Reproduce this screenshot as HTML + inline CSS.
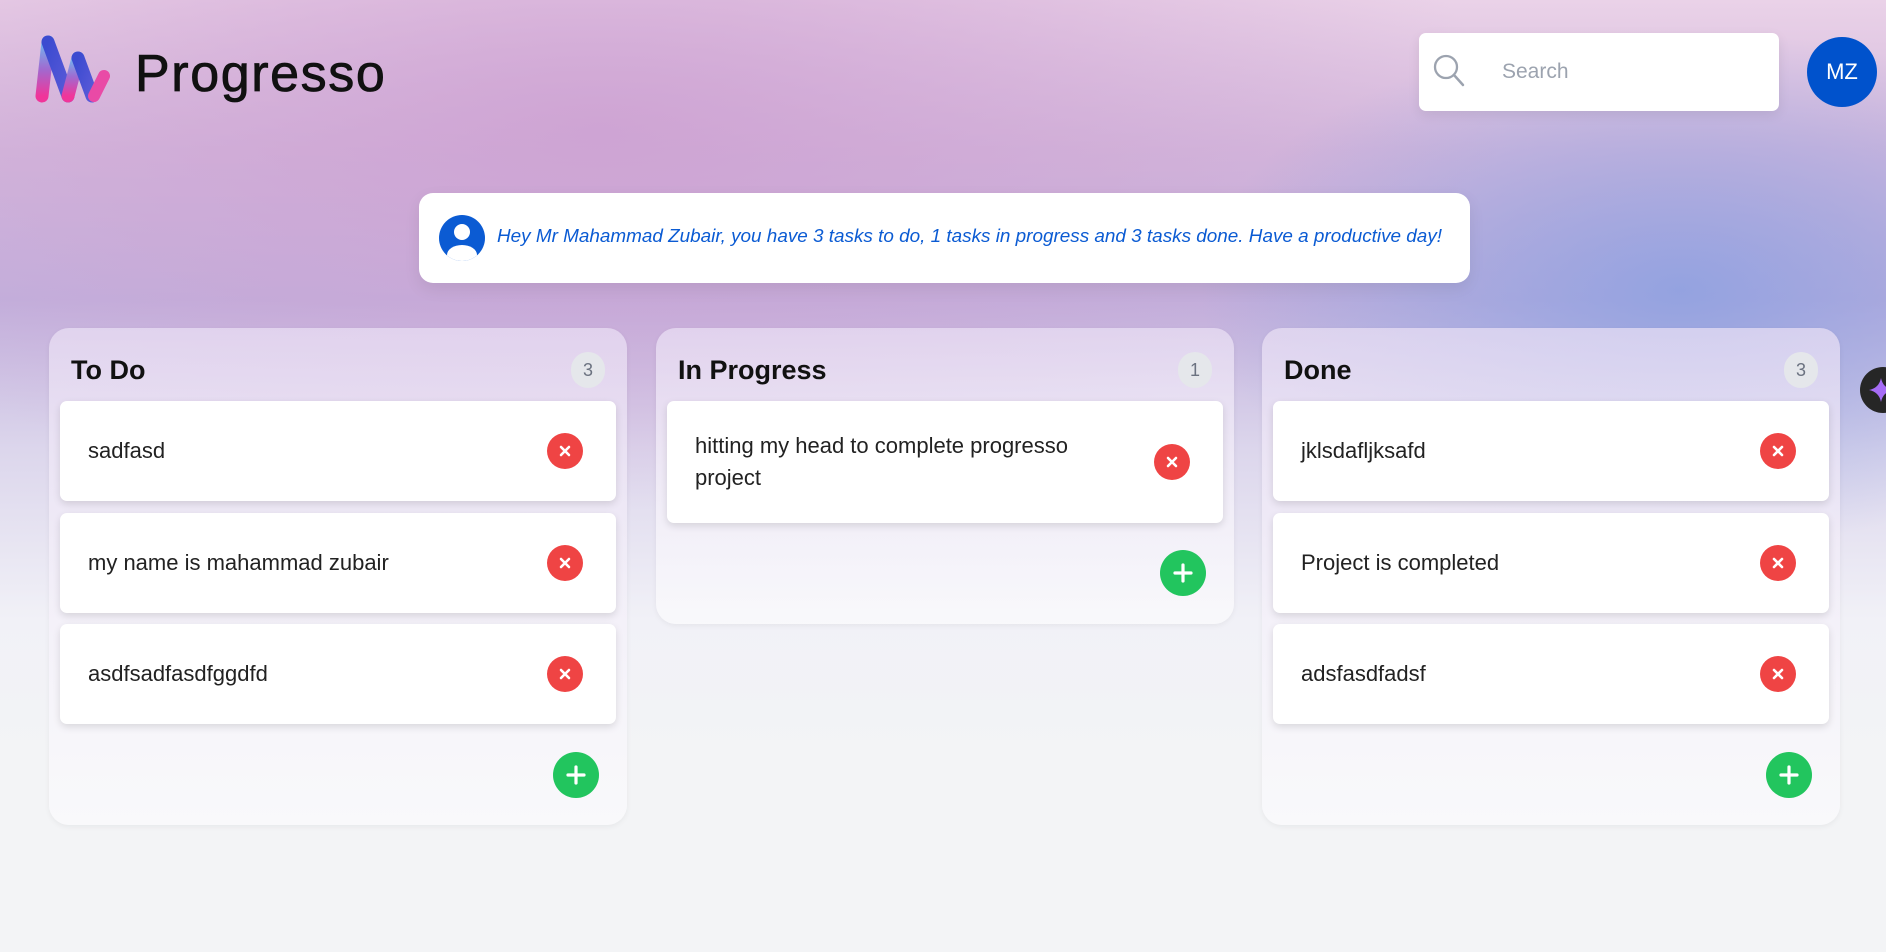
<!DOCTYPE html>
<html><head><meta charset="utf-8"><style>
*{box-sizing:border-box;margin:0;padding:0}
body{width:1886px;height:952px;overflow:hidden;font-family:"Liberation Sans",sans-serif;background:#f3f4f6;position:relative}
.bg{position:absolute;inset:0;background:
radial-gradient(ellipse 480px 260px at 1680px 290px,rgba(140,160,225,.85),rgba(140,160,225,0)),
radial-gradient(ellipse 900px 380px at 600px 130px,rgba(205,160,210,.85),rgba(205,160,210,0)),
linear-gradient(180deg,#ead2e8 0px,#d3b8dc 150px,#c1b0dc 300px,#dcd6ec 450px,#f1f1f7 620px,#f3f4f6 760px);}
.logo{position:absolute;left:34px;top:34px}
.brand{position:absolute;left:135px;top:44px;font-size:52px;color:#111;letter-spacing:1.6px;-webkit-text-stroke:0.8px #111}
.search{position:absolute;left:1419px;top:33px;width:360px;height:78px;background:#fff;border-radius:7px;box-shadow:0 4px 12px rgba(0,0,0,.08)}
.search span{position:absolute;left:83px;top:27px;font-size:21px;color:#9ca3af}
.av{position:absolute;left:1807px;top:37px;width:70px;height:70px;border-radius:50%;background:#0052cc;color:#fff;font-size:22px;display:flex;align-items:center;justify-content:center}
.msg{position:absolute;left:419px;top:193px;width:1051px;height:90px;background:#fff;border-radius:14px;box-shadow:0 6px 16px rgba(0,0,0,.08)}
.msg .t{position:absolute;left:78px;top:33px;font-style:italic;color:#0b5bd3;font-size:18.9px;white-space:nowrap}
.col{position:absolute;top:328px;width:578px;border-radius:20px;background:linear-gradient(180deg,rgba(235,225,245,.7),rgba(250,250,252,.85));box-shadow:0 2px 6px rgba(0,0,0,.05)}
.col h2{position:absolute;left:22px;top:27px;font-size:27px;font-weight:bold;color:#111}
.cnt{position:absolute;right:22px;top:24px;width:34px;height:36px;border-radius:17px;background:#e5e7eb;color:#6b7280;font-size:18px;display:flex;align-items:center;justify-content:center}
.card{position:absolute;left:11px;width:556px;height:100px;background:#fff;border-radius:7px;box-shadow:0 3px 8px rgba(0,0,0,.12)}
.card p{position:absolute;left:28px;top:50%;transform:translateY(-50%);font-size:22px;color:#222;line-height:32px;width:430px}
.x{position:absolute;right:33px;top:50%;margin-top:-18px;width:36px;height:36px;border-radius:50%;background:#ef4444;display:flex;align-items:center;justify-content:center}
.plus{position:absolute;width:46px;height:46px;border-radius:50%;background:#22c55e;display:flex;align-items:center;justify-content:center}
.fab{position:absolute;left:1860px;top:367px;width:46px;height:46px;border-radius:50%;background:#262626}
</style></head><body>
<div class="bg"></div>
<svg class="logo" width="80" height="72" viewBox="0 0 80 72">
<defs><linearGradient id="g" x1="0" y1="0" x2="0" y2="1"><stop offset="0" stop-color="#6fb7f0"/><stop offset=".5" stop-color="#a06ad0"/><stop offset="1" stop-color="#f0359a"/></linearGradient>
<linearGradient id="g2" x1="0" y1="0" x2="1" y2="1"><stop offset="0" stop-color="#3c4bd0"/><stop offset="1" stop-color="#5a5ad8"/></linearGradient></defs>
<path d="M14 8 L8 62" stroke="url(#g)" stroke-width="13" stroke-linecap="round" fill="none"/>
<path d="M14 8 L34 62" stroke="url(#g2)" stroke-width="13" stroke-linecap="round" fill="none"/>
<path d="M44 24 L34 62" stroke="url(#g)" stroke-width="13" stroke-linecap="round" fill="none"/>
<path d="M44 24 L58 62" stroke="url(#g2)" stroke-width="13" stroke-linecap="round" fill="none"/>
<path d="M70 42 L60 62" stroke="#e94aa6" stroke-width="12" stroke-linecap="round" fill="none"/>
</svg>
<div class="brand">Progresso</div>
<div class="search"><svg style="position:absolute;left:13px;top:18px" width="34" height="40" viewBox="0 0 34 40"><circle cx="14" cy="16" r="11" fill="none" stroke="#9ca3af" stroke-width="2.3"/><path d="M22 24 L31 34" stroke="#9ca3af" stroke-width="2.5" stroke-linecap="round"/></svg><span>Search</span></div>
<div class="av">MZ</div>
<div class="msg"><svg style="position:absolute;left:20px;top:22px" width="46" height="46" viewBox="0 0 46 46"><defs><clipPath id="c"><circle cx="23" cy="23" r="23"/></clipPath></defs><circle cx="23" cy="23" r="23" fill="#0b5bd3"/><g clip-path="url(#c)"><circle cx="23" cy="17" r="8" fill="#fff"/><ellipse cx="23" cy="40" rx="15" ry="10" fill="#fff"/></g></svg>
<div class="t">Hey Mr Mahammad Zubair, you have 3 tasks to do, 1 tasks in progress and 3 tasks done. Have a productive day!</div></div>

<div class="col" style="left:49px;height:497px"><h2>To Do</h2><div class="cnt">3</div>
<div class="card" style="top:73px"><p>sadfasd</p><div class="x"><svg width="14" height="14"><path d="M3 3L11 11M11 3L3 11" stroke="#fff" stroke-width="2.6" stroke-linecap="round"/></svg></div></div>
<div class="card" style="top:185px"><p>my name is mahammad zubair</p><div class="x"><svg width="14" height="14"><path d="M3 3L11 11M11 3L3 11" stroke="#fff" stroke-width="2.6" stroke-linecap="round"/></svg></div></div>
<div class="card" style="top:296px"><p>asdfsadfasdfggdfd</p><div class="x"><svg width="14" height="14"><path d="M3 3L11 11M11 3L3 11" stroke="#fff" stroke-width="2.6" stroke-linecap="round"/></svg></div></div>
<div class="plus" style="left:504px;top:424px"><svg width="22" height="22"><path d="M11 3V19M3 11H19" stroke="#fff" stroke-width="3.2" stroke-linecap="round"/></svg></div></div>

<div class="col" style="left:656px;height:296px"><h2>In Progress</h2><div class="cnt">1</div>
<div class="card" style="top:73px;height:122px"><p style="width:420px">hitting my head to complete progresso project</p><div class="x"><svg width="14" height="14"><path d="M3 3L11 11M11 3L3 11" stroke="#fff" stroke-width="2.6" stroke-linecap="round"/></svg></div></div>
<div class="plus" style="left:504px;top:222px"><svg width="22" height="22"><path d="M11 3V19M3 11H19" stroke="#fff" stroke-width="3.2" stroke-linecap="round"/></svg></div></div>

<div class="col" style="left:1262px;height:497px"><h2>Done</h2><div class="cnt">3</div>
<div class="card" style="top:73px"><p>jklsdafljksafd</p><div class="x"><svg width="14" height="14"><path d="M3 3L11 11M11 3L3 11" stroke="#fff" stroke-width="2.6" stroke-linecap="round"/></svg></div></div>
<div class="card" style="top:185px"><p>Project is completed</p><div class="x"><svg width="14" height="14"><path d="M3 3L11 11M11 3L3 11" stroke="#fff" stroke-width="2.6" stroke-linecap="round"/></svg></div></div>
<div class="card" style="top:296px"><p>adsfasdfadsf</p><div class="x"><svg width="14" height="14"><path d="M3 3L11 11M11 3L3 11" stroke="#fff" stroke-width="2.6" stroke-linecap="round"/></svg></div></div>
<div class="plus" style="left:504px;top:424px"><svg width="22" height="22"><path d="M11 3V19M3 11H19" stroke="#fff" stroke-width="3.2" stroke-linecap="round"/></svg></div></div>

<div class="fab"><svg style="position:absolute;left:8px;top:10px" width="26" height="26" viewBox="0 0 26 26"><path d="M13 1 Q15 11 25 13 Q15 15 13 25 Q11 15 1 13 Q11 11 13 1Z" fill="#a66cf5"/></svg></div>
</body></html>
